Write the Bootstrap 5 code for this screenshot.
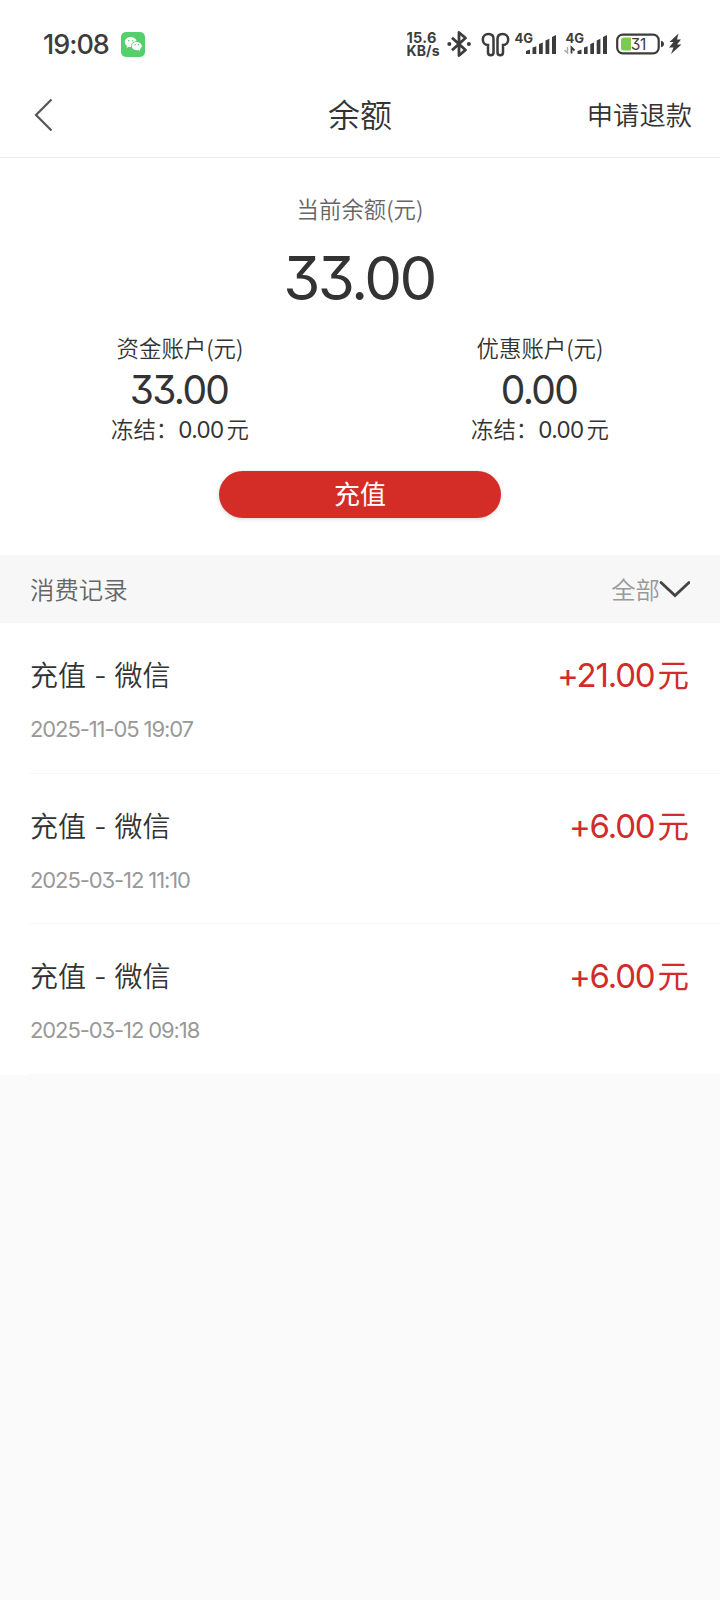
<!DOCTYPE html>
<html lang="zh-CN">
<head>
<meta charset="utf-8">
<meta name="viewport" content="width=device-width, initial-scale=1">
<title>余额</title>
<link href="https://cdn.jsdelivr.net/npm/bootstrap@5.3.0/dist/css/bootstrap.min.css" rel="stylesheet">
<style>
body{background:#fafafa;color:#333;font-family:Inter,"Noto Sans CJK SC",sans-serif;font-feature-settings:"cv09";overflow-x:hidden}
.han,.yuan{font-family:"Noto Sans CJK SC",sans-serif;font-weight:350}
.statusbar{height:72px;padding:16px 0 0 43px;color:#3c3c3c}
.clock{font-size:27px;line-height:40px;font-weight:500;width:78px;padding-top:2px;letter-spacing:-1px}
.titlebar{height:86px;border-bottom:1px solid #ededed}
.side{width:200px}
.page-title{font-size:32px;line-height:40px;padding-top:2px;font-weight:350}
.refund{font-size:26.3px;padding:3px 28px 0 0;font-weight:350}
.summary{padding:35px 0 37px}
.cap{font-size:22.4px;line-height:30px;font-weight:350}
.now{color:#666}
.total{font-size:60px;line-height:60px;margin-top:25px;font-weight:400;letter-spacing:-2.6px;text-indent:-2px}
.accounts{margin-top:24px}
.sum{font-size:39px;line-height:44px;margin:6px 0 3px;letter-spacing:-1.700px;text-indent:-2px}
.cap b{font-weight:400;letter-spacing:-.6px}
.yuan{margin-left:3px;line-height:1}
.recharge{width:282px;height:47px;margin-top:26px;background:#d42c27;color:#fff;font-size:26px;line-height:47px;box-shadow:0 1px 4px rgba(0,0,0,.16)}
.section-bar{height:68px;background:#f7f7f7;padding:0 30px;font-size:24.4px;color:#666;font-weight:350}
.section-bar .label-text{padding-top:3px}
.filter{color:#999}
.filter .label-text{margin-right:-1px}
.record{height:150.5px;padding:33px 31px 0 0;margin-left:30px;border-bottom:1px solid #f7f7f7}
.name{font-size:28px;line-height:40px;font-weight:350}
.amount{font-size:33px;line-height:38px;color:#d22b2b;letter-spacing:-1.200px}
.amount .yuan{font-size:31.5px;letter-spacing:0;font-weight:400}
.time{font-size:22px;line-height:30px;margin-top:18px;color:#999;letter-spacing:-1.100px}
</style>
</head>
<body>
<div class="bg-white">
  <header>
    <div class="statusbar d-flex align-items-center">
      <div class="clock">19:08</div>
      <svg width="24" height="25" viewBox="0 0 24 25"><rect width="24" height="25" rx="5" fill="#55cf6c"/><path fill="#fff" d="M9.7 5C6.300 5 3.800 7.200 3.800 10c0 1.600.8 3 2.200 3.900L5.500 15.900l2.200-1.200c.8.2 1.600.3 2.400.3-.4-3.300 2.300-5.700 5.500-5.700C15.100 6.800 12.700 5 9.700 5z"/><path fill="#fff" d="M15.800 9.900c-2.900 0-5.100 1.900-5.100 4.200s2.200 4.200 5.100 4.200c.6 0 1.200-.1 1.700-.3l1.800 1-.5-1.700c1.200-.7 2-1.900 2-3.200 0-2.300-2.200-4.200-5-4.200z"/><g fill="#55cf6c"><circle cx="7.700" cy="8.700" r=".8"/><circle cx="11.700" cy="8.700" r=".8"/><circle cx="14.200" cy="12.700" r=".7"/><circle cx="17.600" cy="12.700" r=".7"/></g></svg>
      <div class="d-flex align-items-center ms-auto">
        <svg width="41" height="40" viewBox="404 24 41 40" font-weight="700" fill="#3c3c3c"><text x="406.500" y="43.300" font-size="14.500" textLength="30">15.6</text><text x="406.500" y="56.300" font-size="14" textLength="33">KB/s</text></svg>
        <svg width="28" height="40" viewBox="445 24 28 40"><path d="M452 37.700l13.500 12.300-6.500 5.500V32.500l6.500 5.500L452 50.300" fill="none" stroke="#3c3c3c" stroke-width="2.800" stroke-linejoin="round"/><circle cx="449.300" cy="44" r="2" fill="#3c3c3c"/><circle cx="468.900" cy="44" r="2" fill="#3c3c3c"/></svg>
        <svg width="39" height="40" viewBox="473 24 39 40"><path d="M488.500 34c-3.500 0-5.700 2.500-5.700 5.500s2 5.500 5.200 5.500v7.500c0 3.500 5.500 3.500 5.500 0V39c0-3-1.800-5-5-5zM502.500 34c3.500 0 5.700 2.500 5.700 5.500s-2 5.500-5.200 5.500v7.500c0 3.500-5.500 3.500-5.500 0V39c0-3 1.800-5 5-5z" fill="none" stroke="#3c3c3c" stroke-width="2.500"/></svg>
        <svg width="50" height="40" viewBox="512 24 50 40"><text x="514.500" y="42.500" font-size="13" font-weight="700" fill="#3c3c3c">4G</text><path d="M526 51l4-1.500V54h-4zM532.500 47.500l3.800-1.200V54h-3.800zM539 44l3.800-1.500V54H539zM545.500 40.500l3.800-1.700V54h-3.800zM552 37l4-2v19h-4z" fill="#3c3c3c"/></svg>
        <svg width="50" height="40" viewBox="562 24 50 40"><text x="565.500" y="42.500" font-size="13" font-weight="700" fill="#3c3c3c">4G</text><path d="M567.500 47v6l-3-3" fill="none" stroke="#aaa" stroke-width="1.500"/><path d="M571.500 53.500v-6l3 3" fill="none" stroke="#3c3c3c" stroke-width="1.800"/><path d="M577.500 51l4-1.500V54h-4zM584 47.500l3.600-1.200V54H584zM590.300 44l3.700-1.500V54h-3.700zM596.700 40.500l3.700-1.700V54h-3.700zM603 37l4-2v19h-4z" fill="#3c3c3c"/></svg>
        <svg width="54" height="40" viewBox="612 24 54 40"><rect x="617.200" y="34.700" width="41.500" height="18.600" rx="5.500" fill="none" stroke="#3c3c3c" stroke-width="2.200"/><path d="M623.500 37.500H631v13h-7.500q-2.500 0-2.500-2.500v-8q0-2.500 2.500-2.500z" fill="#7ccb4c"/><path d="M661.500 41.300q2 .3 2 2.700t-2 2.700z" fill="#3c3c3c" stroke="#3c3c3c"/><text x="638.300" y="49.700" font-size="15.500" text-anchor="middle" letter-spacing="-.4" fill="#3c3c3c">31</text></svg>
        <svg width="54" height="40" viewBox="666 24 54 40"><path d="M678.500 33.500L669.500 42h4l-4.500 5.500h4.500l-2.500 6.500 10.500-9.500h-4.500l4-5h-4z" fill="#3c3c3c"/></svg>
      </div>
    </div>
    <nav class="titlebar d-flex align-items-center justify-content-between">
      <div class="side d-flex"><svg class="ms-4" width="40" height="40" viewBox="24 95 40 40"><path d="M51.500 99.500L36 115l15.500 15.500" fill="none" stroke="#555" stroke-width="2.200"/></svg></div>
      <div class="page-title">余额</div>
      <div class="side refund text-end">申请退款</div>
    </nav>
  </header>
  <section class="summary text-center">
    <div class="cap han now">当前余额(元)</div>
    <div class="total">33.00</div>
    <div class="accounts row g-0">
      <div class="col-6"><div class="cap han">资金账户(元)</div><div class="sum">33.00</div><div class="cap">冻结：<b>0.00</b><span class="yuan">元</span></div></div>
      <div class="col-6"><div class="cap han">优惠账户(元)</div><div class="sum">0.00</div><div class="cap">冻结：<b>0.00</b><span class="yuan">元</span></div></div>
    </div>
    <button class="recharge btn rounded-pill border-0 p-0">充值</button>
  </section>
  <div class="section-bar d-flex align-items-center justify-content-between">
    <div class="label-text">消费记录</div>
    <div class="filter d-flex align-items-center"><span class="label-text">全部</span><svg width="31" height="24" viewBox="659 577 31 24"><path d="M661 582.500l14 13 14-13" fill="none" stroke="#444" stroke-width="2.800" stroke-linecap="round"/></svg></div>
  </div>
  <main>
    <div class="record"><div class="d-flex justify-content-between"><div class="name">充值 - 微信</div><div class="amount">+21.00<span class="yuan">元</span></div></div><div class="time">2025-11-05 19:07</div></div>
    <div class="record"><div class="d-flex justify-content-between"><div class="name">充值 - 微信</div><div class="amount">+6.00<span class="yuan">元</span></div></div><div class="time">2025-03-12 11:10</div></div>
    <div class="record"><div class="d-flex justify-content-between"><div class="name">充值 - 微信</div><div class="amount">+6.00<span class="yuan">元</span></div></div><div class="time">2025-03-12 09:18</div></div>
  </main>
</div>
<script src="https://cdn.jsdelivr.net/npm/bootstrap@5.3.0/dist/js/bootstrap.bundle.min.js"></script>
</body>
</html>
